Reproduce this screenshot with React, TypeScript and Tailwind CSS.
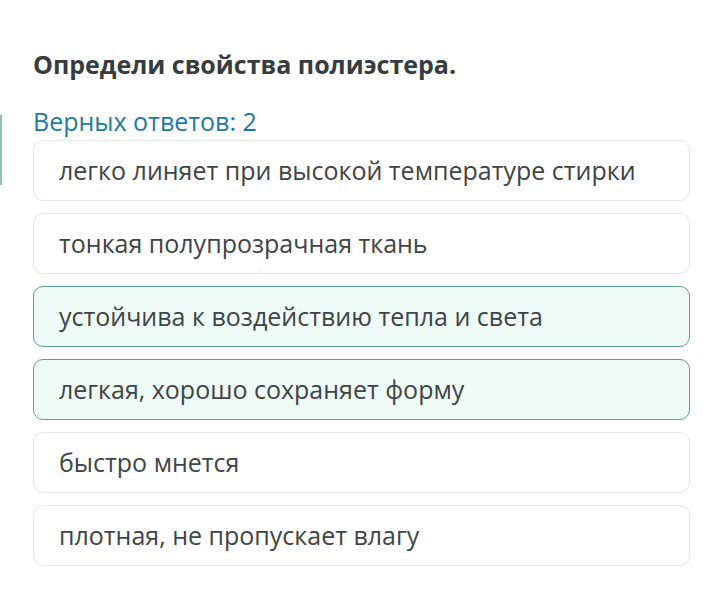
const options = [
  { text: "легко линяет при высокой температуре стирки", selected: false },
  { text: "тонкая полупрозрачная ткань", selected: false },
  { text: "устойчива к воздействию тепла и света", selected: true },
  { text: "легкая, хорошо сохраняет форму", selected: true },
  { text: "быстро мнется", selected: false },
  { text: "плотная, не пропускает влагу", selected: false },
];

export default function App() {
  return (
    <div
      className="relative h-[590px] w-[720px] overflow-hidden bg-white"
      style={{ fontFamily: '"Open Sans", "Noto Sans", sans-serif' }}
    >
      <div className="absolute left-0 top-[115px] h-[70px] w-[2px] bg-[#8fc4ab]" />
      <div className="pl-[33px] pr-[30px] pt-[47px]">
        <h1 className="text-[25px] font-bold leading-[34px] text-[#363c3f]">
          Определи свойства полиэстера.
        </h1>
        <p className="mt-[24px] text-[25px] leading-[32px] text-[#1b7aa3]">Верных ответов: 2</p>
        <div className="mt-[3px] flex flex-col gap-[12px]">
          {options.map((o) => (
            <div
              key={o.text}
              className={`flex h-[61px] items-center rounded-[10px] border px-[25px] text-[25px] text-[#3e4447] ${
                o.selected ? "border-[#5f9e94] bg-[#effbf6]" : "border-[#e6e8e8] bg-white"
              }`}
            >
              {o.text}
            </div>
          ))}
        </div>
      </div>
    </div>
  );
}
